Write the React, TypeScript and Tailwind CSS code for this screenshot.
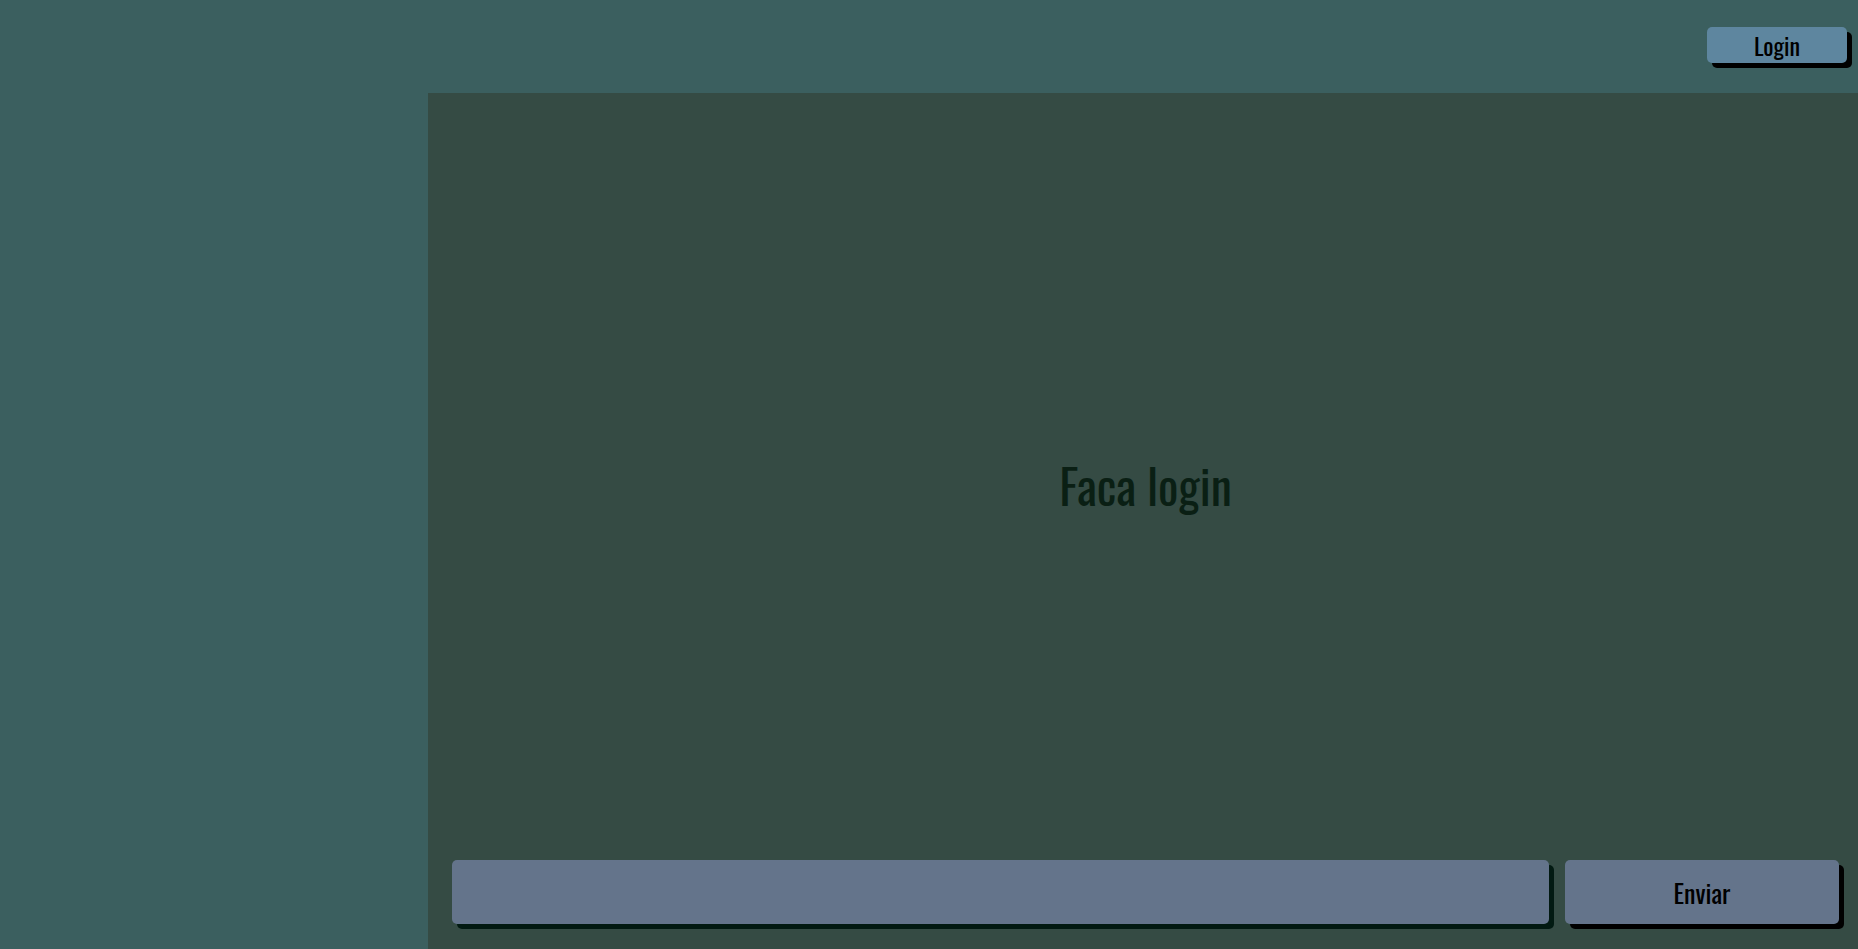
import React from 'react';

const FONT = {
  fontFamily: "Oswald, 'Liberation Sans Narrow', 'DejaVu Sans Condensed', 'Roboto Condensed', 'Liberation Sans', sans-serif",
};

/**
 * Cabeçalho com botão de login
 */
const Header = () => (
  <header className="h-[93px] flex justify-end items-start pt-[27px] pr-[11px]">
    <button
      className="w-[140px] h-[36px] rounded-[5px] bg-[#5e869f] text-[24px] text-black shadow-[5px_5px_0_0_#000] leading-none"
      style={FONT}
    >
      Login
    </button>
  </header>
);

/**
 * Área de chat
 */
const ChatPanel = () => (
  <main className="flex-1 bg-[#354b44] flex flex-col">
    <div className="flex-1 flex items-center justify-center pt-[36px] pl-[5px]">
      <h1 className="text-[48px] text-[#0a1f14] leading-none" style={FONT}>
        Faca login
      </h1>
    </div>
    <div className="flex gap-[16px] pl-[24px] pr-[19px] pb-[25px] pt-[20px]">
      <input
        className="flex-1 h-[64px] rounded-[5px] bg-[#64748b] shadow-[5px_5px_0_0_#021a12] outline-none"
        style={FONT}
      />
      <button
        className="w-[274px] h-[64px] rounded-[5px] bg-[#64748b] text-[26px] text-black shadow-[5px_5px_0_0_#000]"
        style={FONT}
      >
        Enviar
      </button>
    </div>
  </main>
);

export default function App() {
  return (
    <div className="w-full h-screen bg-[#3b5f5f] flex flex-col overflow-hidden">
      <Header />
      <div className="flex-1 flex">
        <aside className="w-[428px]" />
        <ChatPanel />
      </div>
    </div>
  );
}
